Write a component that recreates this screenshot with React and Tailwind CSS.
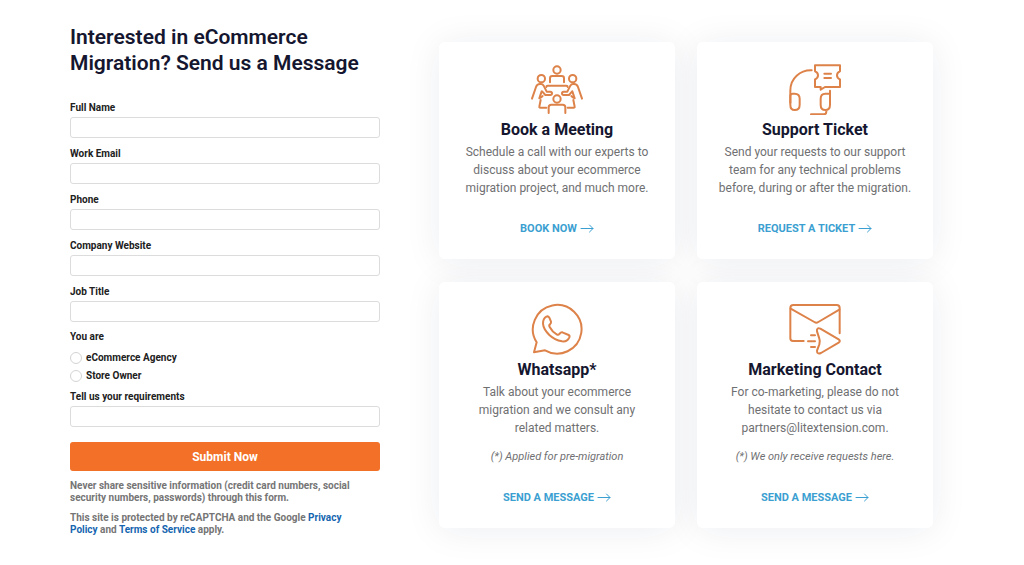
import React from 'react';

const fields = [
  { id: 'fullName', label: 'Full Name', type: 'text' },
  { id: 'email', label: 'Work Email', type: 'email' },
  { id: 'phone', label: 'Phone', type: 'tel' },
  { id: 'website', label: 'Company Website', type: 'text' },
  { id: 'jobTitle', label: 'Job Title', type: 'text' },
];

const iconProps = {
  className: 'w-[54px] h-[52px] text-[#dd8249]',
  fill: 'none',
  stroke: 'currentColor',
  strokeWidth: 6,
  strokeLinecap: 'round',
  strokeLinejoin: 'round',
  'aria-hidden': true,
};

const MeetingIcon = () => (
  <svg viewBox="45 24 162 156" {...iconProps}>
    <circle cx="126" cy="45" r="11" />
    <circle cx="79" cy="71" r="11" />
    <circle cx="173" cy="71" r="11" />
    <circle cx="126" cy="132" r="11" />
    <path d="M105 82V70q0-7 7-7h28q7 0 7 7v12" />
    <path d="M94 96q0-4 4-4h56q4 0 4 4" />
    <path d="M51 131l12-35q3-9 12-9h3q5 0 8 5l9 18h11q5 0 5 5t-5 5H91l-9-10" />
    <path d="M80 109l-7 21q7-3 10-7" />
    <path d="M201 131l-12-35q-3-9-12-9h-3q-5 0-8 5l-9 18h-11q-5 0-5 5t5 5h16l9-10" />
    <path d="M172 109l7 21q-7-3-10-7" />
    <path d="M77 135l-4 20q-1 3 3 3h18M175 135l4 20q1 3-3 3h-18" />
    <path d="M101 174v-17q0-8 8-8h34q8 0 8 8v17" />
  </svg>
);

const TicketIcon = () => (
  <svg viewBox="39 24 162 156" {...iconProps}>
    <path d="M46 143v-36q0-28 19-45t45-16" />
    <path d="M46 123q0-7 7-7h6q15 0 15 15v18q0 16-15 16-13 0-13-16z" />
    <path d="M165 107v42q0 16-14 16t-14-16v-18q0-15 14-15h14M154 166v4q0 8-8 8h-38" />
    <path d="M120 31h75v18q-9 3-9 12t9 12v23h-45l-13 8v-8h-17V73q9-3 9-12t-9-12z" />
    <path d="M148 56h20M148 69h20" />
  </svg>
);

const WhatsappIcon = () => (
  <svg viewBox="45 24 162 156" {...iconProps}>
    <path d="M57 172l8-30a73 73 0 1 1 25 24z" />
    <path d="M94 65q6-3 9 3l5 12q1 4-3 8-4 3-1 8 8 15 21 22 5 3 8-1 5-6 9-5l19 8q4 2 2 7-6 14-22 12-22-4-38-19-18-18-19-34 0-16 10-21z" />
  </svg>
);

const MailIcon = () => (
  <svg viewBox="39 24 162 156" {...iconProps}>
    <path d="M86 138H54q-8 0-8-8V39q0-9 9-9h130q9 0 9 9v76" />
    <path d="M47 41l71 40q6 4 12 0l63-37" />
    <path d="M126 109q-2-12 10-8l55 32q7 5 0 10l-53 31q-12 5-12-7l7-19q3-9 0-17z" />
    <path d="M108 121h12M99 139h21M108 156h12" />
  </svg>
);

const Arrow = () => (
  <svg
    viewBox="0 0 14 10"
    className="w-[14px] h-[10px]"
    fill="none"
    stroke="currentColor"
    strokeLinecap="round"
    strokeLinejoin="round"
    aria-hidden="true"
  >
    <path d="M1 4.500h12M9.500 1L13 4.500 9.500 8" />
  </svg>
);

const contacts = [
  {
    title: 'Book a Meeting',
    Icon: MeetingIcon,
    lines: ['Schedule a call with our experts to', 'discuss about your ecommerce', 'migration project, and much more.'],
    action: 'BOOK NOW',
  },
  {
    title: 'Support Ticket',
    Icon: TicketIcon,
    lines: ['Send your requests to our support', 'team for any technical problems', 'before, during or after the migration.'],
    action: 'REQUEST A TICKET',
  },
  {
    title: 'Whatsapp*',
    Icon: WhatsappIcon,
    lines: ['Talk about your ecommerce', 'migration and we consult any', 'related matters.'],
    note: '(*) Applied for pre-migration',
    action: 'SEND A MESSAGE',
  },
  {
    title: 'Marketing Contact',
    Icon: MailIcon,
    lines: ['For co-marketing, please do not', 'hesitate to contact us via', 'partners@litextension.com.'],
    note: '(*) We only receive requests here.',
    action: 'SEND A MESSAGE',
  },
];

const TextField = ({ id, label, type }) => (
  <div className="flex flex-col gap-px">
    <label htmlFor={id} className="text-[10px] leading-4">{label}</label>
    <input
      id={id}
      name={id}
      type={type}
      className="w-full h-[21px] px-2 text-[10px] border border-[#dcdcdc] rounded-[3px] bg-white"
    />
  </div>
);

const RadioOption = ({ value, label }) => (
  <label className="flex items-center gap-1 text-[10px] leading-[18px]">
    <input
      type="radio"
      name="role"
      value={value}
      className="appearance-none w-3 h-3 rounded-full border border-[#d4d4d4] bg-white checked:border-4 checked:border-[#f37028]"
    />
    {label}
  </label>
);

const ContactForm = () => (
  <form className="text-[#212121] font-bold" onSubmit={(e) => e.preventDefault()}>
    <div className="flex flex-col gap-2">
      {fields.map((field) => (
        <TextField key={field.id} {...field} />
      ))}
    </div>

    <fieldset className="mt-[7px]">
      <legend className="text-[10px] leading-4 mb-1">You are</legend>
      <RadioOption value="agency" label="eCommerce Agency" />
      <RadioOption value="owner" label="Store Owner" />
    </fieldset>

    <div className="mt-1">
      <TextField id="requirements" label="Tell us your requirements" type="text" />
    </div>

    <button
      type="submit"
      className="w-full h-[29px] mt-[15px] rounded-[3px] bg-[#f37028] text-white text-xs font-bold"
    >
      Submit Now
    </button>

    <div className="mt-[9px] flex flex-col gap-2 text-[10px] leading-3 text-[#757575]">
      <p>Never share sensitive information (credit card numbers, social<br />security numbers, passwords) through this form.</p>
      <p>
        This site is protected by reCAPTCHA and the Google{' '}
        <a href="#privacy" className="text-[#1565b0]">Privacy<br />Policy</a> and{' '}
        <a href="#terms" className="text-[#1565b0]">Terms of Service</a> apply.
      </p>
    </div>
  </form>
);

const ContactCard = ({ contact }) => {
  const { title, Icon, lines, note, action } = contact;

  return (
    <article className="relative flex flex-col items-center py-[21px] rounded-md bg-white text-center text-xs leading-[18px] text-[#6f7072]">
      <Icon />
      <h2 className="mt-[5px] text-base leading-5 font-bold text-[#15162f]">{title}</h2>
      <p className="mt-[3px]">
        {lines.map((line) => (
          <span key={line} className="block">{line}</span>
        ))}
      </p>
      {note && <p className="mt-[11px] text-[11px] leading-[18px] italic">{note}</p>}
      <a
        href="#contact"
        className="mt-[23px] flex items-center gap-[3px] text-[11px] leading-[18px] font-bold text-[#3b9fd1]"
      >
        {action}
        <Arrow />
      </a>
    </article>
  );
};

const App = () => {
  return (
    <main className="grid grid-cols-[310fr_494fr] items-start gap-[59px] pl-[70px] pr-[91px] pt-6 pb-6 bg-white font-['Roboto',sans-serif]">
      <section>
        <h1 className="mb-6 text-[21px] leading-[26px] font-semibold text-[#15162f]">
          Interested in eCommerce
          <br />
          Migration? Send us a Message
        </h1>
        <ContactForm />
      </section>

      {/* Contact cards */}
      <section className="mt-[18px] grid grid-cols-2 gap-x-[22px] gap-y-[23px]">
        {contacts.map((contact) => (
          <div key={contact.title} className="rounded-md shadow-[0_2px_36px_rgba(30,35,80,0.08)]">
            <ContactCard contact={contact} />
          </div>
        ))}
      </section>
    </main>
  );
};

export default App;
